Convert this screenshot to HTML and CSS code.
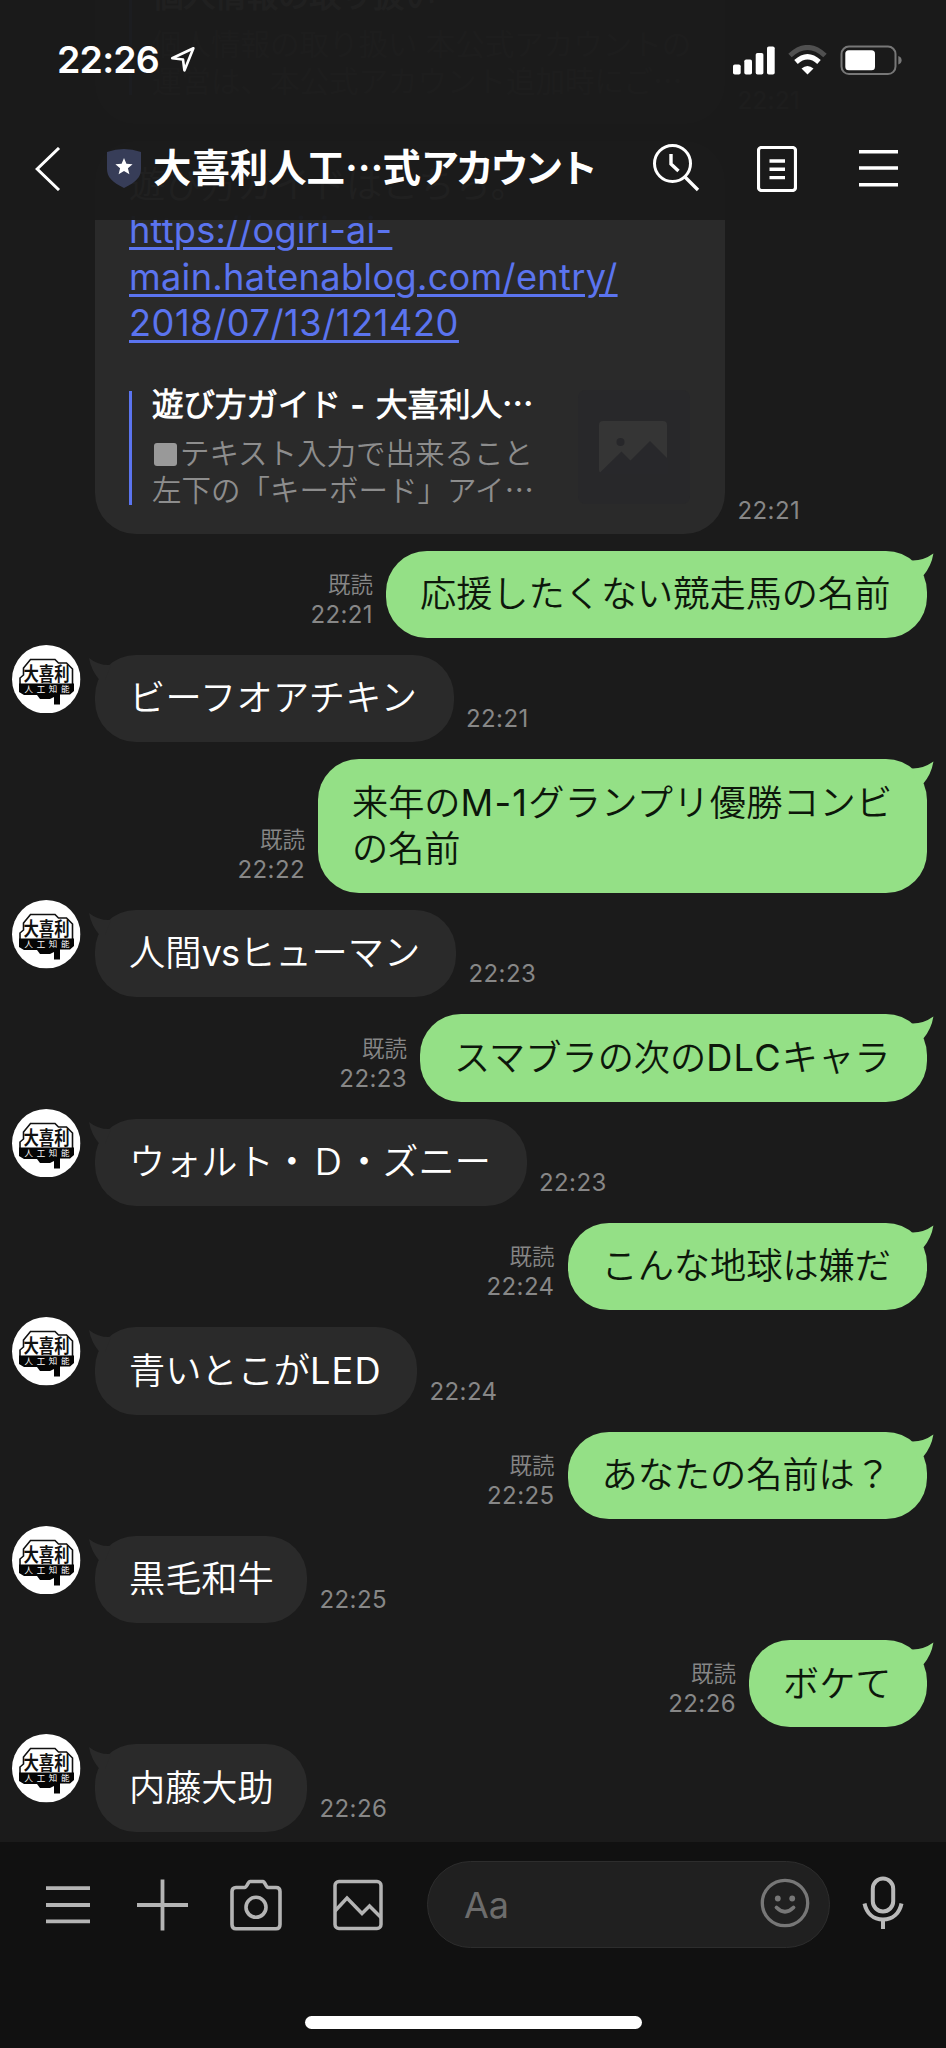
FILE: index.html
```html
<!DOCTYPE html>
<html lang="ja">
<head>
<meta charset="utf-8">
<title>大喜利人工知能</title>
<link rel="stylesheet" href="styles.css">
</head>
<body>
<svg class="defs" aria-hidden="true">
  <symbol id="avatar" viewBox="0 0 68.5 68.5">
    <circle cx="34.25" cy="34.25" r="34.25" fill="#fff"/>
    <path d="M8 40V33L11.5 30V23L18.5 14.5H43L46.5 18H54.5L60.5 24V40" fill="none" stroke="#111" stroke-width="1.6"/>
    <path d="M7 38.5H62V46L58 49.5H48V59.5H42V52L38 54H28L25 50H12L7 47Z" fill="#050505"/>
    <g transform="translate(11.5 35.8) scale(1 1.12)"><text class="logo-big" textLength="46" lengthAdjust="spacingAndGlyphs">大喜利</text></g>
    <text x="12.5" y="47.4" class="logo-small" textLength="45">人工知能</text>
  </symbol>
  <symbol id="tail-in" viewBox="0 0 24 26"><path d="M0 2Q10 10 22 9L16 24H10.5Q2 14 0 2Z" fill="#2a2a2a"/></symbol>
  <symbol id="tail-out" viewBox="0 0 24 26"><path d="M23.4 1.5Q13 9 1.5 8.5L7 24H13Q21.5 14 23.4 1.5Z" fill="#94e086"/></symbol>
</svg>
<div class="phone">
  <header class="top">
    <div class="status">
      <span class="clock">22:26</span>
      <svg class="loc" width="26" height="27" viewBox="0 0 26 27"><path d="M23.4 2.2L2.2 12.2L13 13.5L14.4 24.4Z" fill="none" stroke="#fff" stroke-width="2.6" stroke-linejoin="round"/></svg>
      <svg class="signals" width="170" height="32" viewBox="0 0 170 32">
        <g fill="#fff">
          <rect x="0" y="19.5" width="7.7" height="10" rx="1.8"/><rect x="11.3" y="14.5" width="7.7" height="15" rx="1.8"/><rect x="22.7" y="8" width="7.7" height="21.5" rx="1.8"/><rect x="34" y="1.5" width="7.7" height="28" rx="1.8"/>
          <path d="M74.5 29.5L68.5 23.5Q74.5 18.5 80.5 23.5Z"/>
        </g>
        <path d="M57 10.5Q74.5 -5.5 92 10.5" fill="none" stroke="#505050" stroke-width="5"/>
        <path d="M63 17Q74.5 6.5 86 17" fill="none" stroke="#fff" stroke-width="5.2"/>
        <rect x="108.5" y="1.6" width="54" height="27.5" rx="7.5" fill="none" stroke="#777" stroke-width="2"/>
        <rect x="112.3" y="5.3" width="29.7" height="20" rx="3.5" fill="#fff"/>
        <path d="M165.3 11Q168.6 12 168.6 15.3Q168.6 18.5 165.3 19.5Z" fill="#777"/>
      </svg>
    </div>
    <div class="nav">
      <svg class="back" width="28" height="44" viewBox="0 0 28 44"><path d="M25 1L3.2 22L25 43" fill="none" stroke="#fff" stroke-width="3"/></svg>
      <svg class="shield" width="34" height="39" viewBox="0 0 34 39"><path d="M0 3Q17-3 34 3V20C34 28 29 33 17 39C5 33 0 28 0 20Z" fill="#373d58"/><path d="M17 9L19.4 14.8L25.6 15.2L20.9 19.2L22.4 25.3L17 22L11.6 25.3L13.1 19.2L8.4 15.2L14.6 14.8Z" fill="#fff"/></svg>
      <h1 class="title">大喜利人工<span class="dots">…</span>式<span class="kana">アカウント</span></h1>
      <svg class="n-search" width="48" height="50" viewBox="0 0 48 50" fill="none" stroke="#fff"><circle cx="20.5" cy="20.5" r="18" stroke-width="3"/><path d="M33 34L46 47" stroke-width="3.4"/><path d="M19 11V21L26.5 28" stroke-width="3.4"/></svg>
      <svg class="n-note" width="40" height="46" viewBox="0 0 40 46" fill="none" stroke="#fff"><rect x="1.5" y="1.5" width="37" height="43" rx="3" stroke-width="3.2"/><path d="M12.5 15H28M12.5 23.3H28M12.5 31.6H28" stroke-width="3.4"/></svg>
      <svg class="n-menu" width="39" height="38" viewBox="0 0 39 38"><path d="M0 2.7H39M0 19H39M0 35.7H39" stroke="#fff" stroke-width="3.4"/></svg>
    </div>
  </header>

  <main class="chat">
    <div class="row in">
      <div class="bubble card-bubble">
        <div class="card"><div class="card-text wide">
          <b>個人情報の取り扱い</b>
          <p>個人情報の取り扱い 本公式アカウントの<br>運営は、本公式アカウント追加時にご<span class="cjk">…</span></p>
        </div></div>
      </div>
      <time>22:21</time>
    </div>
    <div class="row in">
      <div class="bubble card-bubble">
        <div class="lead">遊び方ガイドはこちら。</div>
        <a class="link"><span class="l1">https://ogiri-ai-</span><br><span class="l2">main.hatenablog.com/entry/</span><br><span class="l3">2018/07/13/121420</span></a>
        <div class="card">
          <div class="card-text">
            <b>遊び方ガイド<span class="dash"> - </span>大喜利人<span class="cjk">…</span></b>
            <p><i class="square"></i>テキスト入力で出来ること<br>左下の「キーボード」アイ<span class="cjk">…</span></p>
          </div>
          <svg class="thumb" width="112" height="114" viewBox="0 0 112 114"><rect width="112" height="114" rx="8" fill="#28282a"/><rect x="21" y="31" width="68" height="52.5" rx="4" fill="#353535"/><circle cx="42.5" cy="52" r="4" fill="#27272a"/><path d="M21 83.5L43.5 61.5L52.5 70.5L72 51L90 69V84H21Z" fill="#28282b"/></svg>
        </div>
      </div>
      <time>22:21</time>
    </div>

    <div class="row out"><time><span class="read">既読</span><br>22:21</time><div class="bubble w541"><svg class="tail"><use href="#tail-out"/></svg>応援したくない競走馬の名前</div></div>
    <div class="row in"><svg class="avatar"><use href="#avatar"/></svg><div class="bubble w358"><svg class="tail"><use href="#tail-in"/></svg><span class="airy">ビーフオアチキン</span></div><time>22:21</time></div>
    <div class="row out"><time><span class="read">既読</span><br>22:22</time><div class="bubble w609"><svg class="tail"><use href="#tail-out"/></svg>来年の<span class="latin">M-1</span><span class="airy">グランプリ優勝コンビ</span><br>の名前</div></div>
    <div class="row in"><svg class="avatar"><use href="#avatar"/></svg><div class="bubble w361"><svg class="tail"><use href="#tail-in"/></svg>人間<span class="tight">vs</span>ヒューマン</div><time>22:23</time></div>
    <div class="row out"><time><span class="read">既読</span><br>22:23</time><div class="bubble w507"><svg class="tail"><use href="#tail-out"/></svg>スマブラの次の<span class="latin">DLC</span>キャラ</div></div>
    <div class="row in"><svg class="avatar"><use href="#avatar"/></svg><div class="bubble w431"><svg class="tail"><use href="#tail-in"/></svg>ウォルト・Ｄ・ズニー</div><time>22:23</time></div>
    <div class="row out"><time><span class="read">既読</span><br>22:24</time><div class="bubble w359"><svg class="tail"><use href="#tail-out"/></svg>こんな地球は嫌だ</div></div>
    <div class="row in"><svg class="avatar"><use href="#avatar"/></svg><div class="bubble w322"><svg class="tail"><use href="#tail-in"/></svg>青いとこが<span class="latin">LED</span></div><time>22:24</time></div>
    <div class="row out"><time><span class="read">既読</span><br>22:25</time><div class="bubble w359"><svg class="tail"><use href="#tail-out"/></svg>あなたの名前は？</div></div>
    <div class="row in"><svg class="avatar"><use href="#avatar"/></svg><div class="bubble w212"><svg class="tail"><use href="#tail-in"/></svg>黒毛和牛</div><time>22:25</time></div>
    <div class="row out"><time><span class="read">既読</span><br>22:26</time><div class="bubble w178"><svg class="tail"><use href="#tail-out"/></svg>ボケて</div></div>
    <div class="row in"><svg class="avatar"><use href="#avatar"/></svg><div class="bubble w212"><svg class="tail"><use href="#tail-in"/></svg>内藤大助</div><time>22:26</time></div>
  </main>

  <footer class="bottom">
    <div class="tools">
      <svg class="t-menu" width="44" height="52" viewBox="0 0 44 52"><path d="M0 9.2H44M0 26H44M0 42.4H44" stroke="#b4b4b4" stroke-width="3.8"/></svg>
      <svg class="t-plus" width="51" height="52" viewBox="0 0 51 52"><path d="M0 26H51M25.5 .5V51.5" stroke="#b4b4b4" stroke-width="3.8"/></svg>
      <svg class="t-camera" width="52" height="52" viewBox="0 0 52 52" fill="none" stroke="#b4b4b4" stroke-width="3.6"><path d="M6 8.5H14.5Q16 8.5 18 4.5Q19 2.5 20 2.5H33Q34 2.5 35.5 5.5Q37 8.5 38 8.5H46Q50 8.5 50 12.5V45.5Q50 49.8 46 49.8H6Q2 49.8 2 45.5V12.5Q2 8.5 6 8.5Z" stroke-linejoin="round"/><circle cx="26" cy="28.3" r="10"/></svg>
      <svg class="t-photo" width="50" height="52" viewBox="0 0 50 52" fill="none" stroke="#b4b4b4" stroke-width="3.5"><rect x="2" y="2.5" width="46" height="47" rx="4"/><path d="M2 32L14 19L29 34.5L36.5 27L48 38.5"/></svg>
      <div class="field">
        <span>Aa</span>
        <svg width="50" height="50" viewBox="0 0 50 50" fill="none" stroke="#777" stroke-width="3.3"><circle cx="25" cy="25" r="22.7"/><path d="M16.5 29.5Q25 38 33.5 29.5" stroke-width="3.8" stroke-linecap="round"/><g fill="#777" stroke="none"><circle cx="17.8" cy="20.5" r="2.9"/><circle cx="32.2" cy="20.5" r="2.9"/></g></svg>
      </div>
      <svg class="t-mic" width="42" height="54" viewBox="0 0 42 54" fill="none" stroke="#b9b9b9" stroke-width="4"><rect x="10.8" y="2.5" width="20.4" height="33" rx="10.2"/><path d="M2.5 27.5C4.5 37 11 43.5 21 43.5S37.5 37 39.5 27.5" stroke-width="4"/><path d="M21 43V53"/></svg>
    </div>
    <div class="home"></div>
  </footer>
</div>
</body>
</html>
```

FILE: styles.css
```css
* { box-sizing: border-box; }
body { margin: 0; background: #1b1b1b; }
svg { display: block; flex: none; }
.defs { position: absolute; width: 0; height: 0; }
.phone {
  width: 946px; height: 2048px; position: relative; overflow: hidden;
  display: flex; flex-direction: column; background: #1b1b1b; color: #fff;
  font-family: Inter, "Noto Sans CJK JP DemiLight", "Noto Sans CJK JP", sans-serif;
}
.cjk, .dots { font-family: "Noto Sans CJK JP", sans-serif; line-height: 1px; }

/* header floats over the scrolled conversation */
.top {
  position: absolute; z-index: 2; top: 0; left: 0; width: 946px; height: 220px;
  background: rgba(27, 27, 27, .975);
}
.status { display: flex; height: 120px; padding: 45px 43px 0 57px; align-items: flex-start; }
.clock { font-size: 37.5px; font-weight: 600; line-height: 30px; width: 113px; letter-spacing: -.8px; white-space: nowrap; }
.loc { margin-top: 1px; }
.signals { margin-left: auto; }
.nav { display: flex; align-items: center; height: 98px; padding-left: 34px; }
.shield { margin-left: 45px; margin-top: -2px; }
.title { margin: -8px 0 0 12px; width: 447px; font-family: "Noto Sans CJK JP", sans-serif; font-size: 38.4px; line-height: 50px; font-weight: 700; white-space: nowrap; }
.dots { letter-spacing: -1px; }
.kana { letter-spacing: -3.7px; }
.n-search { margin-left: 52px; margin-top: -2px; }
.n-note { margin-left: 57px; }
.n-menu { margin-left: 62px; margin-top: -2px; }

.chat {
  height: 1842px; flex: none; overflow: hidden; padding: 0 19px 10.3px 95px;
  display: flex; flex-direction: column; justify-content: flex-end; gap: 17px;
}
.row { display: flex; align-items: flex-end; position: relative; flex: none; }
.row.out { justify-content: flex-end; }
.row time { font-size: 24px; letter-spacing: .4px; line-height: 29px; color: #878787; margin: 0 12.5px 9px; white-space: nowrap; }
.row.out time { text-align: right; margin-right: 13px; }
.read { font-size: 22.5px; letter-spacing: 0; line-height: 1px; position: relative; top: -1px; }
.bubble {
  position: relative; flex: none; min-height: 87.3px; padding: 20.4px 34px; border-radius: 41px;
  background: #2a2a2a; font-size: 36.2px; line-height: 46.5px; white-space: nowrap;
}
.out .bubble { background: #94e086; color: #0d170b; }
.latin { letter-spacing: 1.2px; }
.tight { letter-spacing: -.8px; }
.airy { letter-spacing: .35px; }
.tail { position: absolute; width: 24px; height: 26px; left: -6.5px; top: 1px; }
.out .tail { left: auto; right: -7px; top: 1px; }
.avatar { position: absolute; left: -83px; top: -10px; width: 68.5px; height: 68.5px; }
.logo-big { font: 700 17px "Noto Sans CJK JP", sans-serif; fill: #111; }
.logo-small { font: 400 8.5px "Noto Sans CJK JP", sans-serif; fill: #fff; }
.w541 { width: 541px; }
.w358 { width: 358.5px; }
.w609 { width: 609px; }
.w361 { width: 361px; }
.w507 { width: 507px; }
.w431 { width: 431.5px; }
.w359 { width: 359.5px; }
.w322 { width: 322px; }
.w212 { width: 212px; }
.w178 { width: 178px; }

.card-bubble { width: 630px; padding: 21px 34px 28.7px; }
.link { display: block; margin-top: -1px; color: #5b74ef; text-decoration: underline; text-decoration-thickness: 2.5px; text-underline-offset: 4px; }
.l1 { letter-spacing: .2px; }
.l2 { letter-spacing: .3px; }
.l3 { letter-spacing: .55px; }
.card { display: flex; justify-content: space-between; height: 114px; margin-top: 44px; border-left: 3px solid #5b74ef; }
.card-text { padding-left: 20px; width: 420px; }
.card-text.wide { width: 560px; }
.card b { display: block; font-size: 31.5px; line-height: 36px; font-weight: 700; margin-top: -3.5px; }
.dash { letter-spacing: 1.8px; }
.card p { margin: 12px 0 0; font-size: 29.5px; line-height: 36.8px; color: #8d8d8d; }
.square { display: inline-block; width: 23px; height: 23px; margin: 0 3px -2px 2px; border-radius: 3px; background: #999; }
.thumb { margin: -1px 1px 0 0; }

.bottom { height: 206px; background: #111; }
.tools { display: flex; align-items: center; padding: 19px 0 0 46px; height: 106px; }
.t-plus { margin-left: 47px; }
.t-camera { margin-left: 42px; }
.t-photo { margin-left: 51px; }
.field {
  display: flex; align-items: center; justify-content: space-between; margin-left: 44px;
  width: 402.5px; height: 87px; padding: 0 19px 0 36px; border-radius: 44px;
  border: 1px solid #2d2d2d; background: #202020; color: #6c6c6c; font-size: 36px;
}
.field svg { margin-top: -3px; }
.t-mic { margin-left: 32px; margin-top: -3px; }
.home { width: 337px; height: 13px; margin: 68px 0 0 305px; border-radius: 7px; background: #fff; }
```
